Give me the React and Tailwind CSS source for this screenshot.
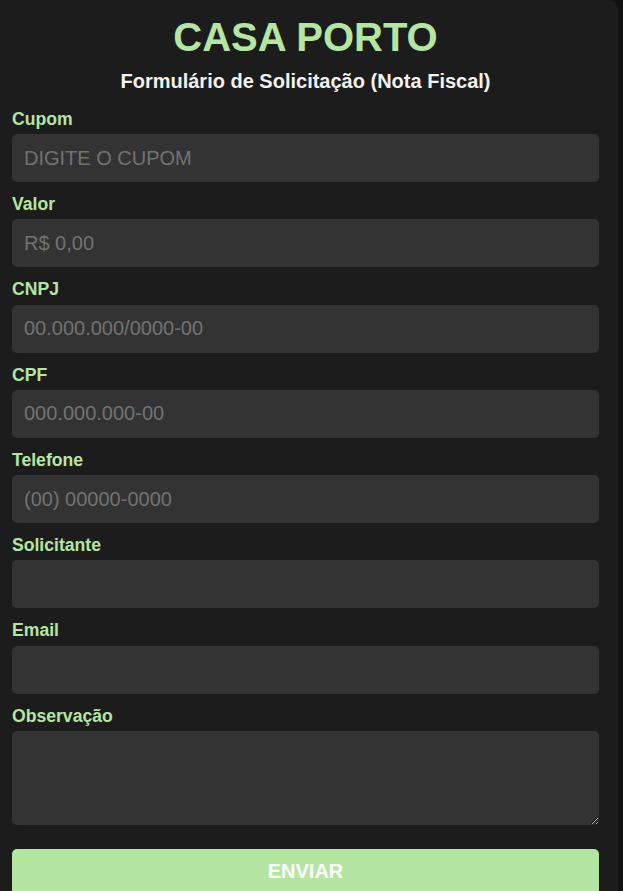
import { useState } from 'react';

const fields = [
  { id: 'cupom', label: 'Cupom', placeholder: 'DIGITE O CUPOM' },
  { id: 'valor', label: 'Valor', placeholder: 'R$ 0,00' },
  { id: 'cnpj', label: 'CNPJ', placeholder: '00.000.000/0000-00' },
  { id: 'cpf', label: 'CPF', placeholder: '000.000.000-00' },
  { id: 'telefone', label: 'Telefone', placeholder: '(00) 00000-0000' },
  { id: 'solicitante', label: 'Solicitante', placeholder: '' },
  { id: 'email', label: 'Email', placeholder: '' },
];

export default function App() {
  const [form, setForm] = useState({});

  const update = (id) => (e) => setForm({ ...form, [id]: e.target.value });

  return (
    <div className="min-h-screen bg-[#121212] font-['Liberation_Sans',Arial,sans-serif]">
      <div className="w-[618px] bg-[#1c1c1c] rounded-tr-[10px] pt-[14px] pl-[12px] pr-[19px] pb-6">
        <h1 className="text-center text-[40px] leading-[1.15] font-bold text-[#b4e6a2]">CASA PORTO</h1>
        <h2 className="mt-[10px] mb-[16px] text-center text-[20px] leading-[1.15] font-bold text-[#f2f2f2]">
          Formulário de Solicitação (Nota Fiscal)
        </h2>

        <form onSubmit={(e) => e.preventDefault()}>
          {fields.map((f) => (
            <div key={f.id} className="mb-[12px]">
              <label htmlFor={f.id} className="block mb-[5px] text-[17.6px] leading-[1.15] font-bold text-[#b4e6a2]">
                {f.label}
              </label>
              <input
                id={f.id}
                type="text"
                value={form[f.id] || ''}
                onChange={update(f.id)}
                placeholder={f.placeholder}
                className="block w-full h-[48px] px-3 rounded-[5px] bg-[#333333] text-[20px] text-white placeholder:text-[#727272] outline-none font-['Liberation_Sans',Arial,sans-serif]"
              />
            </div>
          ))}

          <div className="mb-[24px]">
            <label htmlFor="obs" className="block mb-[5px] text-[17.6px] leading-[1.15] font-bold text-[#b4e6a2]">
              Observação
            </label>
            <textarea
              id="obs"
              value={form.obs || ''}
              onChange={update('obs')}
              className="block w-full h-[94px] px-3 py-2 rounded-[5px] bg-[#333333] text-[20px] text-white outline-none font-['Liberation_Sans',Arial,sans-serif]"
            />
          </div>

          <button
            type="submit"
            className="block w-full h-[46px] rounded-[5px] bg-[#b4e6a2] text-white text-[20px] font-bold leading-[1.15]"
          >
            ENVIAR
          </button>
        </form>
      </div>
    </div>
  );
}
